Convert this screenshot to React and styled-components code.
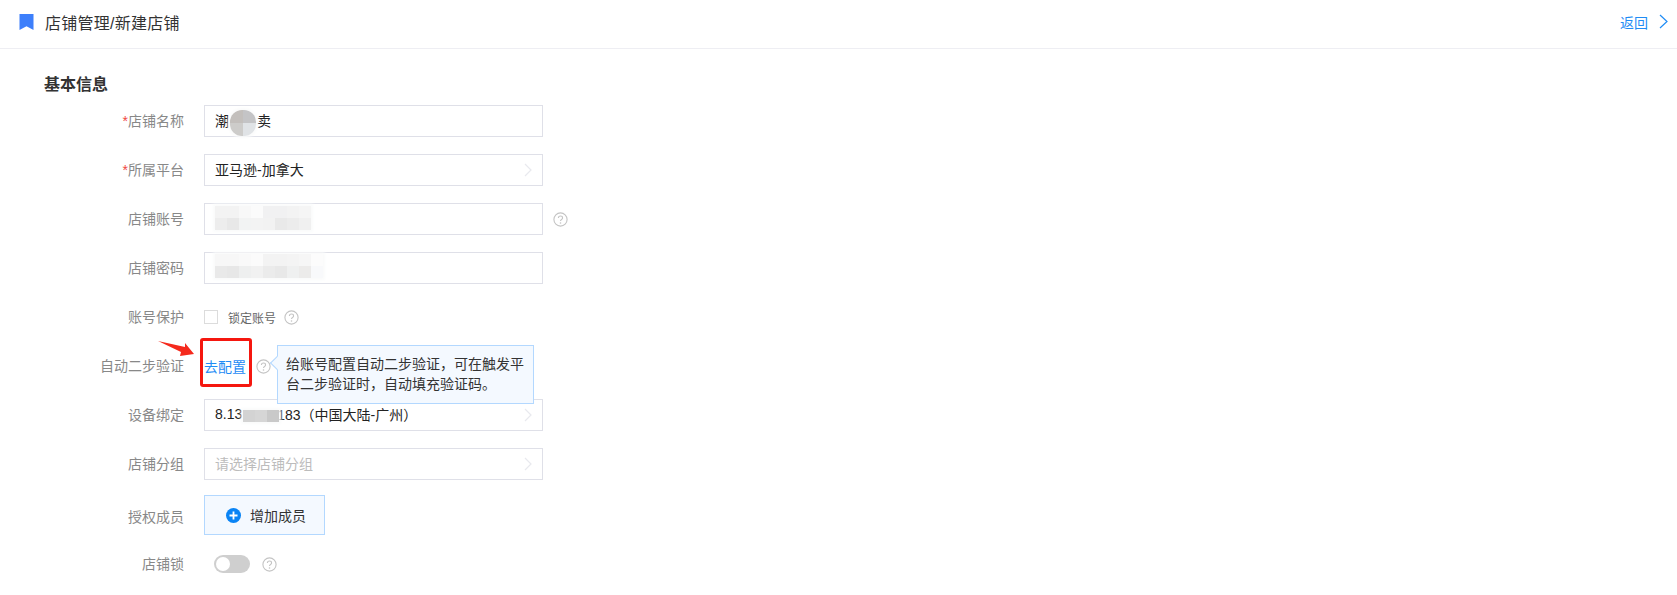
import React from 'react';
import styled, { createGlobalStyle } from 'styled-components';

const GlobalStyle = createGlobalStyle`
  html, body {
    margin: 0;
    padding: 0;
    height: 595px;
    overflow: hidden;
    background: #fff;
    font-family: "Liberation Sans", "Noto Sans CJK SC", sans-serif;
  }
`;

// 打码区域的马赛克色块
const NAME_CELLS = ['#c3bfbc', '#c4c4c6', '#cdccca', '#e0e3e6'];
const ACCOUNT_CELLS = [
  '#f3f3f3', '#f3f3f3', '#f8f8f8', '#fbfbfb', '#f1f1f2', '#f1f1f2', '#f3f3f3', '#f5f5f5',
  '#ededed', '#e8e8e8', '#f2f3f3', '#f3f3f3', '#f2f2f2', '#e9e9e9', '#ececec', '#f0f0f0',
];
const PASSWORD_CELLS = [
  '#f7f7f7', '#f7f7f7', '#f9f9f9', '#fbfbfb', '#f3f3f3', '#f3f3f3', '#f4f4f4', '#f6f6f6', '#fcfcfc',
  '#e9e9e9', '#e7e7e7', '#eeefef', '#f1f1f1', '#ebebeb', '#e8e8e8', '#eff0f0', '#ecebea', '#f8f9fb',
];
const DEVICE_CELLS = ['#d3d3d3', '#d6d6d6', '#c9c9c9'];

function Mosaic({ cells, cols, size = 12, left, top, round }) {
  return (
    <MosaicGrid $cols={cols} $size={size} $left={left} $top={top} $round={round}>
      {cells.map((c, i) => <MosaicCell key={i} $color={c} />)}
    </MosaicGrid>
  );
}

function Chevron() {
  return (
    <ChevronIcon width="8" height="14" viewBox="0 0 8 14">
      <path d="M1 1l6 6-6 6" fill="none" stroke="#e8e9ee" strokeWidth="1.2" />
    </ChevronIcon>
  );
}

function Help() {
  return (
    <HelpIcon width="15" height="15" viewBox="0 0 15 15">
      <circle cx="7.5" cy="7.5" r="6.6" fill="none" stroke="#c4c4c4" strokeWidth="1.1" />
      <path d="M5.4 6c0-1.3 1-2 2.1-2s2.1.7 2.1 1.9c0 1.6-2.1 1.5-2.1 3" fill="none" stroke="#c4c4c4" strokeWidth="1.1" />
      <circle cx="7.5" cy="11" r=".8" fill="#c4c4c4" />
    </HelpIcon>
  );
}

function App() {
  return (
    <Page>
      <GlobalStyle />
      <Header>
        <HeaderLeft>
          <svg width="15" height="16" viewBox="0 0 15 16">
            <path d="M0.5 0H14.5V16L7.5 12.2 0.5 16Z" fill="#3d7ffb" />
          </svg>
          <HeaderTitle>店铺管理/新建店铺</HeaderTitle>
        </HeaderLeft>
        <BackLink>
          返回
          <svg width="9" height="15" viewBox="0 0 9 15">
            <path d="M1 1l7 6.5-7 6.5" fill="none" stroke="#1f8cf5" strokeWidth="1.2" />
          </svg>
        </BackLink>
      </Header>

      <Body>
        <SectionTitle>基本信息</SectionTitle>

        <Row>
          <Label><Star>*</Star>店铺名称</Label>
          <Field>
            潮<Gap $width={28} />卖
            <Mosaic cells={NAME_CELLS} cols={2} size={13} left={25} top={4} round />
          </Field>
        </Row>
        <Row>
          <Label><Star>*</Star>所属平台</Label>
          <Field>亚马逊-加拿大<Chevron /></Field>
        </Row>
        <Row>
          <Label>店铺账号</Label>
          <Field>
            <Mosaic cells={ACCOUNT_CELLS} cols={8} left={10} top={2} />
          </Field>
          <HelpSlot $gap={10}><Help /></HelpSlot>
        </Row>
        <Row>
          <Label>店铺密码</Label>
          <Field>
            <Mosaic cells={PASSWORD_CELLS} cols={9} left={10} top={1} />
          </Field>
        </Row>
        <Row>
          <Label>账号保护</Label>
          <Checkbox />
          <CheckText>锁定账号</CheckText>
          <HelpSlot $gap={8}><Help /></HelpSlot>
        </Row>
        <Row>
          <Label>自动二步验证</Label>
          <ConfigLink>
            去配置
            <RedFrame />
            <RedArrow width="36" height="16" viewBox="0 0 36 16">
              <path d="M0 0L27 6 27 2 36 13 22 15 23 11Z" fill="#f5291c" />
            </RedArrow>
          </ConfigLink>
          <HelpSlot $gap={10}><Help /></HelpSlot>
          <Tooltip>给账号配置自动二步验证，可在触发平台二步验证时，自动填充验证码。</Tooltip>
        </Row>
        <Row>
          <Label>设备绑定</Label>
          <Field>
            8.13<Gap $width={35} />183（中国大陆-广州）
            <Mosaic cells={DEVICE_CELLS} cols={3} left={38} top={10} />
            <Chevron />
          </Field>
        </Row>
        <Row>
          <Label>店铺分组</Label>
          <Field $placeholder>请选择店铺分组<Chevron /></Field>
        </Row>
        <MemberRow>
          <MemberLabel>授权成员</MemberLabel>
          <AddButton>
            <svg width="15" height="15" viewBox="0 0 15 15">
              <circle cx="7.5" cy="7.5" r="7.5" fill="#0a84f5" />
              <path d="M7.5 3.5v8M3.5 7.5h8" stroke="#fff" strokeWidth="1.8" />
            </svg>
            增加成员
          </AddButton>
        </MemberRow>
        <Row>
          <Label>店铺锁</Label>
          <Switch />
          <HelpSlot $gap={12}><Help /></HelpSlot>
        </Row>
      </Body>
    </Page>
  );
}

const Page = styled.div`
  width: 1677px;
  height: 595px;
  overflow: hidden;
  background: #fff;
`;

const Header = styled.header`
  height: 49px;
  box-sizing: border-box;
  border-bottom: 1px solid #eeeef3;
  display: flex;
  align-items: center;
  justify-content: space-between;
  padding: 0 9px 5px 19px;
`;

const HeaderLeft = styled.div`
  display: flex;
  align-items: center;
  gap: 11px;
`;

const HeaderTitle = styled.span`
  font-size: 16px;
  letter-spacing: 0.25px;
  color: #333;
`;

const BackLink = styled.a`
  display: flex;
  align-items: center;
  gap: 11px;
  font-size: 14px;
  color: #1f8cf5;
`;

const Body = styled.main`
  padding-left: 44px;
`;

const SectionTitle = styled.h2`
  margin: 26px 0 0;
  height: 30px;
  line-height: 20px;
  font-size: 16px;
  font-weight: 700;
  color: #333;
`;

const Row = styled.div`
  position: relative;
  display: flex;
  align-items: center;
  height: 32px;
  margin-bottom: 17px;
  font-size: 14px;
`;

const MemberRow = styled(Row)`
  height: 40px;
  margin-top: -2px;
  margin-bottom: 13px;
`;

const Label = styled.label`
  width: 140px;
  margin-right: 20px;
  padding-bottom: 2px;
  flex-shrink: 0;
  text-align: right;
  color: #888;
`;

const MemberLabel = styled(Label)`
  padding: 2px 0 0;
`;

const Star = styled.span`
  color: #f0473f;
`;

const Field = styled.div`
  position: relative;
  box-sizing: border-box;
  width: 339px;
  height: 32px;
  padding: 0 10px 2px;
  display: flex;
  align-items: center;
  border: 1px solid #dfe0e8;
  background: #fff;
  color: ${(p) => (p.$placeholder ? '#bcbcbc' : '#222')};
  font-size: 14px;
`;

const Gap = styled.span`
  display: inline-block;
  width: ${(p) => p.$width}px;
`;

const MosaicGrid = styled.div`
  position: absolute;
  left: ${(p) => p.$left}px;
  top: ${(p) => p.$top}px;
  display: grid;
  grid-template-columns: repeat(${(p) => p.$cols}, ${(p) => p.$size}px);
  grid-auto-rows: ${(p) => p.$size}px;
  border-radius: ${(p) => (p.$round ? '12px' : '0')};
  overflow: hidden;
  box-shadow: 0 0 3px 2px #fafbfb;
`;

const MosaicCell = styled.span`
  background: ${(p) => p.$color};
`;

const ChevronIcon = styled.svg`
  margin-left: auto;
  margin-top: 2px;
`;

const HelpIcon = styled.svg`
  display: block;
`;

const HelpSlot = styled.span`
  margin-left: ${(p) => p.$gap}px;
`;

const Checkbox = styled.span`
  width: 14px;
  height: 14px;
  box-sizing: border-box;
  border: 1px solid #dcdcdc;
  background: #fff;
`;

const CheckText = styled.span`
  margin-left: 10px;
  font-size: 12px;
  color: #666;
`;

const ConfigLink = styled.a`
  position: relative;
  font-size: 14px;
  color: #1f8cf5;
`;

const RedFrame = styled.span`
  position: absolute;
  left: -4px;
  width: 52px;
  top: -18px;
  height: 49px;
  box-sizing: border-box;
  border: 3px solid #f5170f;
  border-radius: 3px;
`;

const RedArrow = styled.svg`
  position: absolute;
  left: -46px;
  top: -15px;
`;

const Tooltip = styled.div`
  position: absolute;
  left: 233px;
  top: -5px;
  width: 257px;
  height: 59px;
  box-sizing: border-box;
  padding: 8px 8px;
  background: #f4f9ff;
  border: 1px solid #b3d8ff;
  font-size: 14px;
  line-height: 20px;
  color: #333;
  z-index: 2;

  &::before {
    content: '';
    position: absolute;
    left: -6px;
    top: 12px;
    width: 9px;
    height: 9px;
    background: #f4f9ff;
    border-left: 1px solid #b3d8ff;
    border-bottom: 1px solid #b3d8ff;
    transform: rotate(45deg);
  }
`;

const AddButton = styled.button`
  width: 121px;
  height: 40px;
  box-sizing: border-box;
  padding: 0 0 0 21px;
  display: flex;
  align-items: center;
  gap: 9px;
  background: #f4f9ff;
  border: 1px solid #b3d8ff;
  font-family: inherit;
  font-size: 14px;
  color: #333;
`;

const Switch = styled.span`
  position: relative;
  display: block;
  margin-left: 10px;
  width: 36px;
  height: 18px;
  border-radius: 9px;
  background: #cfcfcf;

  &::after {
    content: '';
    position: absolute;
    left: 2px;
    top: 2px;
    width: 14px;
    height: 14px;
    border-radius: 50%;
    background: #fff;
  }
`;

export default App;
